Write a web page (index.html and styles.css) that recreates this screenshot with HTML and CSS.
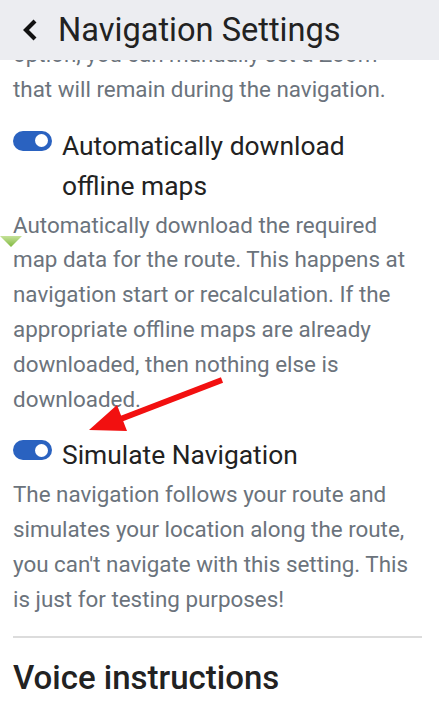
FILE: index.html
```html
<!DOCTYPE html>
<html lang="en">
<head>
    <meta charset="UTF-8">
    <meta name="viewport" content="width=device-width, initial-scale=1.0">
    <title>Navigation Settings</title>
    <link rel="stylesheet" href="styles.css">
</head>
<body>
    <header class="topbar">
        <svg class="back" width="18" height="24" viewBox="0 0 18 24">
            <path d="M14 3 L5 12 L14 21" fill="none" stroke="#111" stroke-width="4.2" stroke-linejoin="miter"/>
        </svg>
        <h1>Navigation Settings</h1>
    </header>

    <main class="content">
        <p class="desc first">option, you can manually set a Zoom<br>that will remain during the navigation.</p>

        <section class="setting">
            <div class="setting-head">
                <span class="toggle on"><span class="knob"></span></span>
                <h2>Automatically download offline maps</h2>
            </div>
            <p class="desc">Automatically download the required map data for the route. This happens at navigation start or recalculation. If the appropriate offline maps are already downloaded, then nothing else is downloaded.</p>
        </section>

        <section class="setting">
            <div class="setting-head">
                <span class="toggle on"><span class="knob"></span></span>
                <h2>Simulate Navigation</h2>
            </div>
            <p class="desc">The navigation follows your route and simulates your location along the route, you can't navigate with this setting. This is just for testing purposes!</p>
        </section>

        <hr class="divider">

        <h3 class="section-title">Voice instructions</h3>
    </main>

    <!-- annotation marks lying over the screenshot -->
    <svg class="marker" width="22" height="12" viewBox="0 0 22 12">
        <defs>
            <linearGradient id="g" x1="0" y1="0" x2="0" y2="1">
                <stop offset="0" stop-color="#c6e29a"/>
                <stop offset="1" stop-color="#7fb83e"/>
            </linearGradient>
        </defs>
        <path d="M0 0 H22 L11 11 Z" fill="url(#g)"/>
    </svg>
    <svg class="arrow" width="150" height="70" viewBox="0 0 150 70">
        <path d="M134 8 L30 48" stroke="#f21010" stroke-width="6" stroke-linecap="butt"/>
        <path d="M1 58 L29 33 L39 59 Z" fill="#f21010"/>
    </svg>
</body>
</html>
```

FILE: styles.css
```css
* {
    margin: 0;
    padding: 0;
    box-sizing: border-box;
}

body {
    font-family: Roboto, 'Noto Sans', sans-serif;
    background: #fff;
    color: #222;
    width: 439px;
    height: 715px;
    overflow: hidden;
}

.topbar {
    position: fixed;
    top: 0;
    left: 0;
    right: 0;
    height: 60px;
    background: #ecedf1;
    display: flex;
    align-items: center;
    padding-left: 21px;
    gap: 19px;
    z-index: 2;
}

.topbar h1 {
    font-size: 32.6px;
    font-weight: 400;
    color: #222;
}

.back {
    display: block;
}

.content {
    padding: 0 15px 0 13px;
    margin-top: 37px;
}

.desc {
    font-size: 22.4px;
    line-height: 34.8px;
    color: #6b737c;
}

.first {
    margin-bottom: 19px;
}

.setting {
    margin-bottom: 19px;
}

.setting .desc {
    margin-top: 2px;
}

.setting-head {
    display: flex;
    align-items: flex-start;
    gap: 10px;
    padding-right: 24px;
}

.setting-head h2 {
    font-size: 26.4px;
    font-weight: 400;
    line-height: 40px;
    color: #222;
}

.toggle {
    flex: none;
    width: 39px;
    height: 20px;
    border-radius: 10px;
    background: #2a62c0;
    margin-top: 5px;
    display: flex;
    align-items: center;
    justify-content: flex-end;
    padding-right: 4px;
}

.knob {
    width: 13px;
    height: 13px;
    border-radius: 50%;
    background: #fff;
}

.divider {
    border: none;
    height: 2px;
    background: #dcdcdc;
    margin: 0 2px 0 0;
}

.section-title {
    font-size: 33px;
    font-weight: 500;
    line-height: 40px;
    margin-top: 20px;
    color: #222;
}

.marker {
    position: absolute;
    left: 0;
    top: 236px;
}

.arrow {
    position: absolute;
    left: 88px;
    top: 372px;
}
```
